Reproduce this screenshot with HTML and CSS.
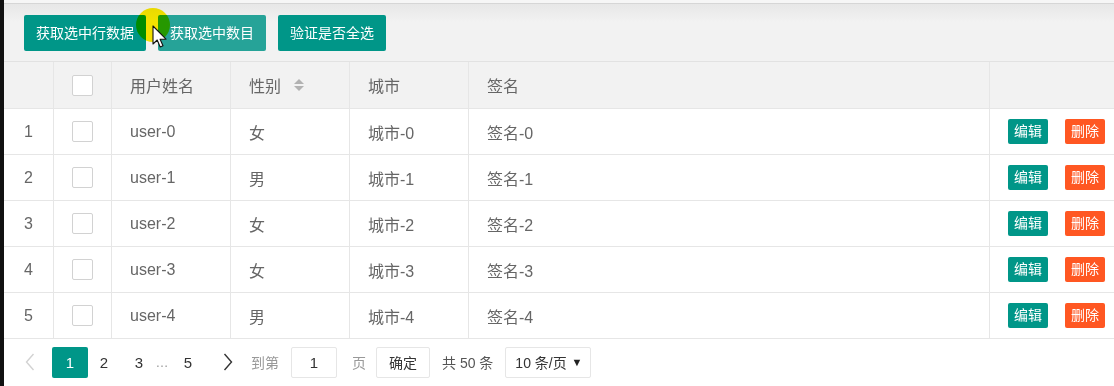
FILE: index.html
```html
<!DOCTYPE html>
<html lang="zh-CN">
<head>
<meta charset="utf-8">
<title>table</title>
<link rel="stylesheet" href="styles.css">
</head>
<body>
<div class="app">
  <div class="topband"></div>
  <div class="toolbar">
    <button class="btn">获取选中行数据</button>
    <button class="btn btn-hover">获取选中数目</button>
    <button class="btn">验证是否全选</button>
  </div>
  <div class="table">
    <div class="row head">
      <div class="cell num"></div>
      <div class="cell chk"><span class="checkbox"></span></div>
      <div class="cell">用户姓名</div>
      <div class="cell">性别<span class="sort"><i class="up"></i><i class="down"></i></span></div>
      <div class="cell">城市</div>
      <div class="cell">签名</div>
      <div class="cell last"></div>
    </div>
    <div class="row">
      <div class="cell num">1</div>
      <div class="cell chk"><span class="checkbox"></span></div>
      <div class="cell">user-0</div>
      <div class="cell">女</div>
      <div class="cell">城市-0</div>
      <div class="cell">签名-0</div>
      <div class="cell last"><span class="mini edit">编辑</span><span class="mini del">删除</span></div>
    </div>
    <div class="row">
      <div class="cell num">2</div>
      <div class="cell chk"><span class="checkbox"></span></div>
      <div class="cell">user-1</div>
      <div class="cell">男</div>
      <div class="cell">城市-1</div>
      <div class="cell">签名-1</div>
      <div class="cell last"><span class="mini edit">编辑</span><span class="mini del">删除</span></div>
    </div>
    <div class="row">
      <div class="cell num">3</div>
      <div class="cell chk"><span class="checkbox"></span></div>
      <div class="cell">user-2</div>
      <div class="cell">女</div>
      <div class="cell">城市-2</div>
      <div class="cell">签名-2</div>
      <div class="cell last"><span class="mini edit">编辑</span><span class="mini del">删除</span></div>
    </div>
    <div class="row">
      <div class="cell num">4</div>
      <div class="cell chk"><span class="checkbox"></span></div>
      <div class="cell">user-3</div>
      <div class="cell">女</div>
      <div class="cell">城市-3</div>
      <div class="cell">签名-3</div>
      <div class="cell last"><span class="mini edit">编辑</span><span class="mini del">删除</span></div>
    </div>
    <div class="row">
      <div class="cell num">5</div>
      <div class="cell chk"><span class="checkbox"></span></div>
      <div class="cell">user-4</div>
      <div class="cell">男</div>
      <div class="cell">城市-4</div>
      <div class="cell">签名-4</div>
      <div class="cell last"><span class="mini edit">编辑</span><span class="mini del">删除</span></div>
    </div>
  </div>
  <div class="pager">
    <span class="pg prev"><svg width="10" height="18" viewBox="0 0 10 18"><path d="M8.5 1 L1.5 9 L8.5 17" fill="none" stroke="#d2d2d2" stroke-width="1.4"/></svg></span>
    <span class="pg active">1</span>
    <span class="pg n2">2</span>
    <span class="pg n3">3</span>
    <span class="pg dots">…</span>
    <span class="pg n5">5</span>
    <span class="pg next"><svg width="10" height="18" viewBox="0 0 10 18"><path d="M1.5 1 L8.5 9 L1.5 17" fill="none" stroke="#333" stroke-width="1.4"/></svg></span>
    <span class="label goto">到第</span>
    <span class="input">1</span>
    <span class="label page">页</span>
    <span class="confirm">确定</span>
    <span class="count">共 50 条</span>
    <span class="select">10 条/页<span class="caret">▼</span></span>
  </div>
  <div class="ring"></div>
  <svg class="cursor" width="16" height="24" viewBox="0 0 16 24"><path d="M1 1 L1 19 L5.2 15 L8.2 22 L11 20.8 L8.1 14.2 L14 14.2 Z" fill="#fff" stroke="#111" stroke-width="1.1" stroke-linejoin="round"/></svg>
</div>
</body>
</html>
```

FILE: styles.css
```css
* { box-sizing: border-box; }
html, body { margin: 0; padding: 0; background: #fff; }
body {
  font-family: "Liberation Sans", "Noto Sans CJK SC", sans-serif;
  color: #666;
}
.app {
  position: relative;
  width: 1114px;
  height: 386px;
  overflow: hidden;
  border-left: 4px solid #111;
  background: #fff;
}
.topband {
  height: 4px;
  background: #f6f6f6;
  border-bottom: 1px solid #d6d6d6;
}
.toolbar {
  display: flex;
  gap: 12px;
  padding: 11px 0 10px 20px;
  background: linear-gradient(#e7e7e7, #f2f2f2 18px);
  border-bottom: 1px solid #e2e2e2;
}
.btn {
  height: 36px;
  padding: 0 12px;
  border: 0;
  border-radius: 2px;
  background: #009688;
  color: #fff;
  font-family: "Liberation Sans", "Noto Sans CJK SC", sans-serif;
  font-size: 14px;
  line-height: 36px;
}
.btn-hover { background: #26a398; }
.row {
  display: grid;
  grid-template-columns: 50px 58px 119px 119px 119px 521px 1fr;
  height: 46px;
  border-bottom: 1px solid #e6e6e6;
  background: #fff;
}
.row.head { background: #f2f2f2; height: 47px; }
.cell {
  display: flex;
  align-items: center;
  padding-left: 18px;
  border-right: 1px solid #e6e6e6;
  font-size: 16px;
  color: #666;
  white-space: nowrap;
}
.cell.num { padding: 0; justify-content: center; }
.cell.chk { padding: 0; justify-content: center; }
.cell.last { border-right: 0; }
.checkbox {
  display: block;
  width: 21px;
  height: 21px;
  border: 1px solid #d2d2d2;
  border-radius: 2px;
  background: #fff;
}
.sort {
  display: inline-flex;
  flex-direction: column;
  gap: 2px;
  margin-left: 13px;
}
.sort i { display: block; width: 0; height: 0; border-left: 5px solid transparent; border-right: 5px solid transparent; }
.sort .up { border-bottom: 5px solid #b2b2b2; }
.sort .down { border-top: 5px solid #b2b2b2; }
.mini {
  display: inline-block;
  width: 40px;
  height: 25px;
  line-height: 25px;
  text-align: center;
  font-size: 14px;
  color: #fff;
  border-radius: 2px;
}
.mini.edit { background: #009688; }
.mini.del { background: #ff5722; margin-left: 17px; }
.pager {
  display: flex;
  align-items: center;
  height: 46px;
  padding-left: 8px;
  font-size: 14px;
  color: #333;
}
.pg {
  display: flex;
  align-items: center;
  justify-content: center;
  height: 31px;
  font-size: 15px;
  color: #333;
}
.prev { width: 36px; }
.active { width: 36px; margin-left: 4px; background: #009688; color: #fff; border-radius: 2px; }
.n2 { width: 32px; }
.n3 { width: 32px; margin-left: 3px; }
.dots { width: 14px; color: #999; font-size: 13px; }
.n5 { width: 32px; margin-left: 3px; }
.next { width: 32px; margin-left: 8px; }
.label { color: #999; font-size: 14px; }
.goto { margin-left: 7px; }
.input {
  width: 46px;
  height: 31px;
  margin-left: 12px;
  border: 1px solid #e6e6e6;
  border-radius: 2px;
  display: flex;
  align-items: center;
  justify-content: center;
  font-size: 15px;
  color: #333;
}
.page { margin-left: 15px; }
.confirm {
  width: 54px;
  height: 31px;
  margin-left: 10px;
  border: 1px solid #e6e6e6;
  border-radius: 2px;
  display: flex;
  align-items: center;
  justify-content: center;
  color: #333;
}
.count { margin-left: 12px; color: #555; }
.select {
  position: relative;
  width: 86px;
  height: 31px;
  margin-left: 12px;
  border: 1px solid #e6e6e6;
  border-radius: 2px;
  display: flex;
  align-items: center;
  padding-left: 9px;
  color: #333;
  font-size: 14px;
}
.caret {
  position: absolute;
  right: 8px;
  top: 8px;
  font-size: 11px;
  color: #222;
}
.ring {
  position: absolute;
  left: 132px;
  top: 8px;
  width: 34px;
  height: 34px;
  border-radius: 50%;
  background: #ffee00;
  mix-blend-mode: multiply;
}
.cursor {
  position: absolute;
  left: 148px;
  top: 25px;
}
```
